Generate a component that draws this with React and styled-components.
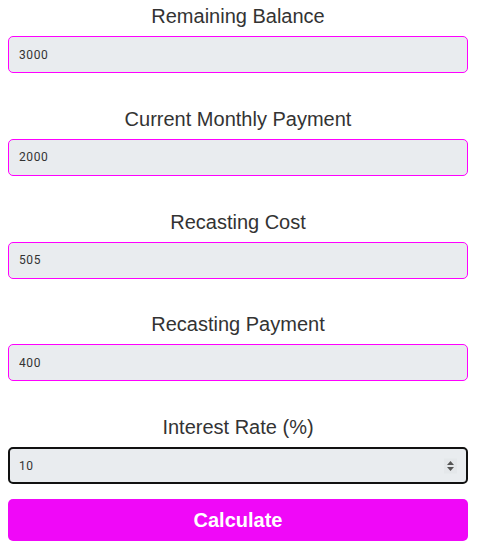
import { useState } from "react";
import styled, { createGlobalStyle } from "styled-components";

const GlobalStyle = createGlobalStyle`
  body {
    margin: 0;
    background: #fff;
    font-family: "Liberation Sans", Arial, sans-serif;
  }
`;

const FIELDS = [
  { key: "balance", label: "Remaining Balance", value: "3000" },
  { key: "payment", label: "Current Monthly Payment", value: "2000" },
  { key: "cost", label: "Recasting Cost", value: "505" },
  { key: "recast", label: "Recasting Payment", value: "400" },
  { key: "rate", label: "Interest Rate (%)", value: "10", focused: true },
];

const Spinner = () => (
  <SpinBox aria-hidden="true">
    <svg width="9" height="11" viewBox="0 0 9 11">
      <path d="M4.5 0.5 L8 4.5 H1 Z" fill="#555" />
      <path d="M4.5 10.5 L8 6.5 H1 Z" fill="#555" />
    </svg>
  </SpinBox>
);

const App = () => {
  const [values, setValues] = useState(
    Object.fromEntries(FIELDS.map((f) => [f.key, f.value]))
  );

  return (
    <>
      <GlobalStyle />
      <Form onSubmit={(e) => e.preventDefault()}>
        {FIELDS.map((f) => (
          <Group key={f.key}>
            <Label htmlFor={f.key}>{f.label}</Label>
            <Field>
              <Input
                id={f.key}
                type="number"
                $focused={f.focused}
                autoFocus={f.focused}
                value={values[f.key]}
                onChange={(e) =>
                  setValues({ ...values, [f.key]: e.target.value })
                }
              />
              {f.focused && <Spinner />}
            </Field>
          </Group>
        ))}
        <Button type="submit">Calculate</Button>
      </Form>
    </>
  );
};

export default App;

const Form = styled.form`
  width: 460px;
  margin: 4px 0 0 8px;
  display: flex;
  flex-direction: column;
`;

const Group = styled.div`
  display: flex;
  flex-direction: column;
  gap: 8px;
  margin-bottom: 33.75px;

  &:nth-last-of-type(1) {
    margin-bottom: 15px;
  }
`;

const Label = styled.label`
  display: block;
  text-align: center;
  font-size: 20px;
  line-height: 24px;
  color: #333;
`;

const Field = styled.div`
  position: relative;
`;

const Input = styled.input`
  box-sizing: border-box;
  display: block;
  width: 100%;
  height: 37px;
  padding: 0 ${({ $focused }) => ($focused ? "9px" : "10px")};
  border: ${({ $focused }) => ($focused ? "2px solid #111" : "1px solid #ff00ff")};
  border-radius: 5px;
  background: #e9ecef;
  color: #333;
  font-family: Roboto, "Liberation Sans", sans-serif;
  font-size: 12px;
  letter-spacing: 0.6px;
  outline: none;
  -moz-appearance: textfield;

  &::-webkit-inner-spin-button,
  &::-webkit-outer-spin-button {
    -webkit-appearance: none;
    margin: 0;
  }
`;

const SpinBox = styled.span`
  position: absolute;
  right: 11px;
  top: 50%;
  transform: translateY(-50%);
  width: 13px;
  height: 15px;
  display: grid;
  place-items: center;
  background: #e4e7ea;
  pointer-events: none;
`;

const Button = styled.button`
  height: 42px;
  border: none;
  border-radius: 5px;
  background: #f008f8;
  color: #fff;
  font-family: "Liberation Sans", Arial, sans-serif;
  font-weight: 700;
  font-size: 20px;
  cursor: pointer;
`;
